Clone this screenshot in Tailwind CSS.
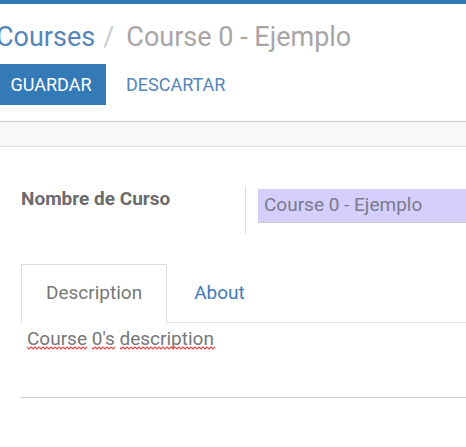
<!DOCTYPE html>
<html lang="es">
<head>
<meta charset="utf-8">
<meta name="viewport" content="width=device-width, initial-scale=1">
<title>Course 0 - Ejemplo</title>
<script src="https://cdn.jsdelivr.net/npm/@tailwindcss/browser@4"></script>
</head>
<body class="min-h-screen overflow-x-hidden bg-white font-[Roboto,sans-serif] text-[19px] leading-6 text-[#777777]">
  <header class="border-t-4 border-[#337ab7]">
    <div class="border-b border-[#c8c8c8] pb-4">
      <nav aria-label="Breadcrumb" class="pt-[17px] pb-[11px]">
        <ol class="-ml-1 flex gap-2 text-[27px] leading-8 whitespace-nowrap">
          <li><a href="#" class="text-[#5586bb]">Courses</a></li>
          <li aria-hidden="true" class="text-[#cccccc]">/</li>
          <li aria-current="page" class="ml-1 text-[#aaa5a5]">Course 0 - Ejemplo</li>
        </ol>
      </nav>
      <div class="flex text-[18px]">
        <button type="button" class="h-[41px] w-[106px] bg-[#337ab7] pr-1 text-white">GUARDAR</button>
        <button type="button" class="h-[41px] px-5 text-[#5586bb]">DESCARTAR</button>
      </div>
    </div>
    <div class="h-[25px] border-b border-[#dddddd] bg-[#f8f8f8]"></div>
  </header>
  <main class="pt-[39px] pl-[21px]">
    <div class="flex">
      <label for="name" class="w-56 shrink-0 pt-px font-bold text-[#6b6b6b]">Nombre de Curso</label>
      <div class="flex h-12 min-w-0 flex-1 items-start border-l border-[#dddddd] pt-[3px] pl-3">
        <input id="name" type="text" value="Course 0 - Ejemplo" class="h-[34px] w-full min-w-0 border-b border-[#cccccc] bg-[#d4cffc] px-[6px] pb-0.5 text-[#7c7a8c] outline-none">
      </div>
    </div>
    <div role="tablist" class="mt-[30px] flex border-b border-[#dddddd]">
      <button type="button" role="tab" id="tab-description" aria-selected="true" aria-controls="panel" class="-mb-px h-[59px] border border-b-white border-[#dddddd] px-6 pb-0.5">Description</button>
      <button type="button" role="tab" aria-selected="false" class="px-[27px] pb-px text-[#427ab8]">About</button>
    </div>
    <div role="tabpanel" id="panel" aria-labelledby="tab-description" class="relative">
      <textarea aria-label="Description" spellcheck="false" class="block h-[75px] w-full resize-none border-b border-[#cccccc] px-[6px] pt-1 outline-none">Course 0's description</textarea>
      <svg aria-hidden="true" class="pointer-events-none absolute top-[23px] left-[6px]" width="192" height="4">
        <defs>
          <pattern id="wave" width="4" height="4" patternUnits="userSpaceOnUse">
            <path d="M-1 .5 0 1 2 3 4 1 5 0" fill="none" stroke="#f04444" stroke-width="1.1"/>
          </pattern>
        </defs>
        <path d="M0 0h60v4H0zM65 0h23v4H65zM93 0h95v4H93z" fill="url(#wave)"/>
      </svg>
    </div>
  </main>
</body>
</html>
